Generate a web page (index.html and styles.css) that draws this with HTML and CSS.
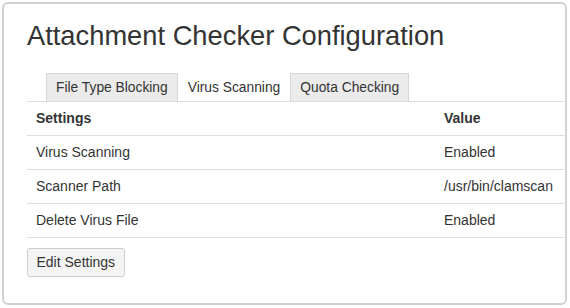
FILE: index.html
```html
<!DOCTYPE html>
<html lang="en">
<head>
  <meta charset="UTF-8">
  <title>Attachment Checker Configuration</title>
  <link rel="stylesheet" href="styles.css">
</head>
<body>
  <div class="panel">
    <h1>Attachment Checker Configuration</h1>

    <ul class="tabs">
      <li class="tab">File Type Blocking</li>
      <li class="tab active">Virus Scanning</li>
      <li class="tab">Quota Checking</li>
    </ul>

    <table class="settings">
      <thead>
        <tr><th>Settings</th><th class="value">Value</th></tr>
      </thead>
      <tbody>
        <tr><td>Virus Scanning</td><td class="value">Enabled</td></tr>
        <tr><td>Scanner Path</td><td class="value">/usr/bin/clamscan</td></tr>
        <tr><td>Delete Virus File</td><td class="value">Enabled</td></tr>
      </tbody>
    </table>

    <button class="btn">Edit Settings</button>
  </div>
</body>
</html>
```

FILE: styles.css
```css
* { box-sizing: border-box; }
body {
  margin: 0;
  font-family: "Liberation Sans", Arial, sans-serif;
  font-size: 14px;
  color: #333;
  background: #fff;
}
.panel {
  margin: 2px 3px 3px 2px;
  height: 303px;
  border: 2px solid #d2d2d2;
  border-radius: 6px;
  padding: 0 1px 0 23px;
}
h1 {
  margin: 0;
  padding-top: 15px;
  font-size: 27.3px;
  font-weight: normal;
  line-height: 34px;
  color: #333;
}
.tabs {
  list-style: none;
  margin: 20px 0 0;
  padding: 0 0 0 19px;
  display: flex;
  border-bottom: 1px solid #ddd;
}
.tab {
  padding: 0 9px;
  height: 28px;
  line-height: 27px;
  font-size: 13.8px;
  background: #ebebeb;
  border: 1px solid #d6d6d6;
  border-bottom: none;
}
.tab.active {
  background: #fff;
  border-color: #fff;
}
.settings {
  width: 100%;
  border-collapse: collapse;
}
.settings th, .settings td {
  text-align: left;
  padding: 0 9px;
  height: 34px;
  border-bottom: 1px solid #ddd;
}
.settings th { font-weight: bold; height: 33px; }
.settings .value { width: 129px; }
.btn {
  margin-top: 10px;
  font-family: inherit;
  font-size: 14px;
  color: #333;
  background: #f4f4f4;
  border: 1px solid #ccc;
  border-radius: 3px;
  height: 29px;
  padding: 0 8.5px;
}
```
